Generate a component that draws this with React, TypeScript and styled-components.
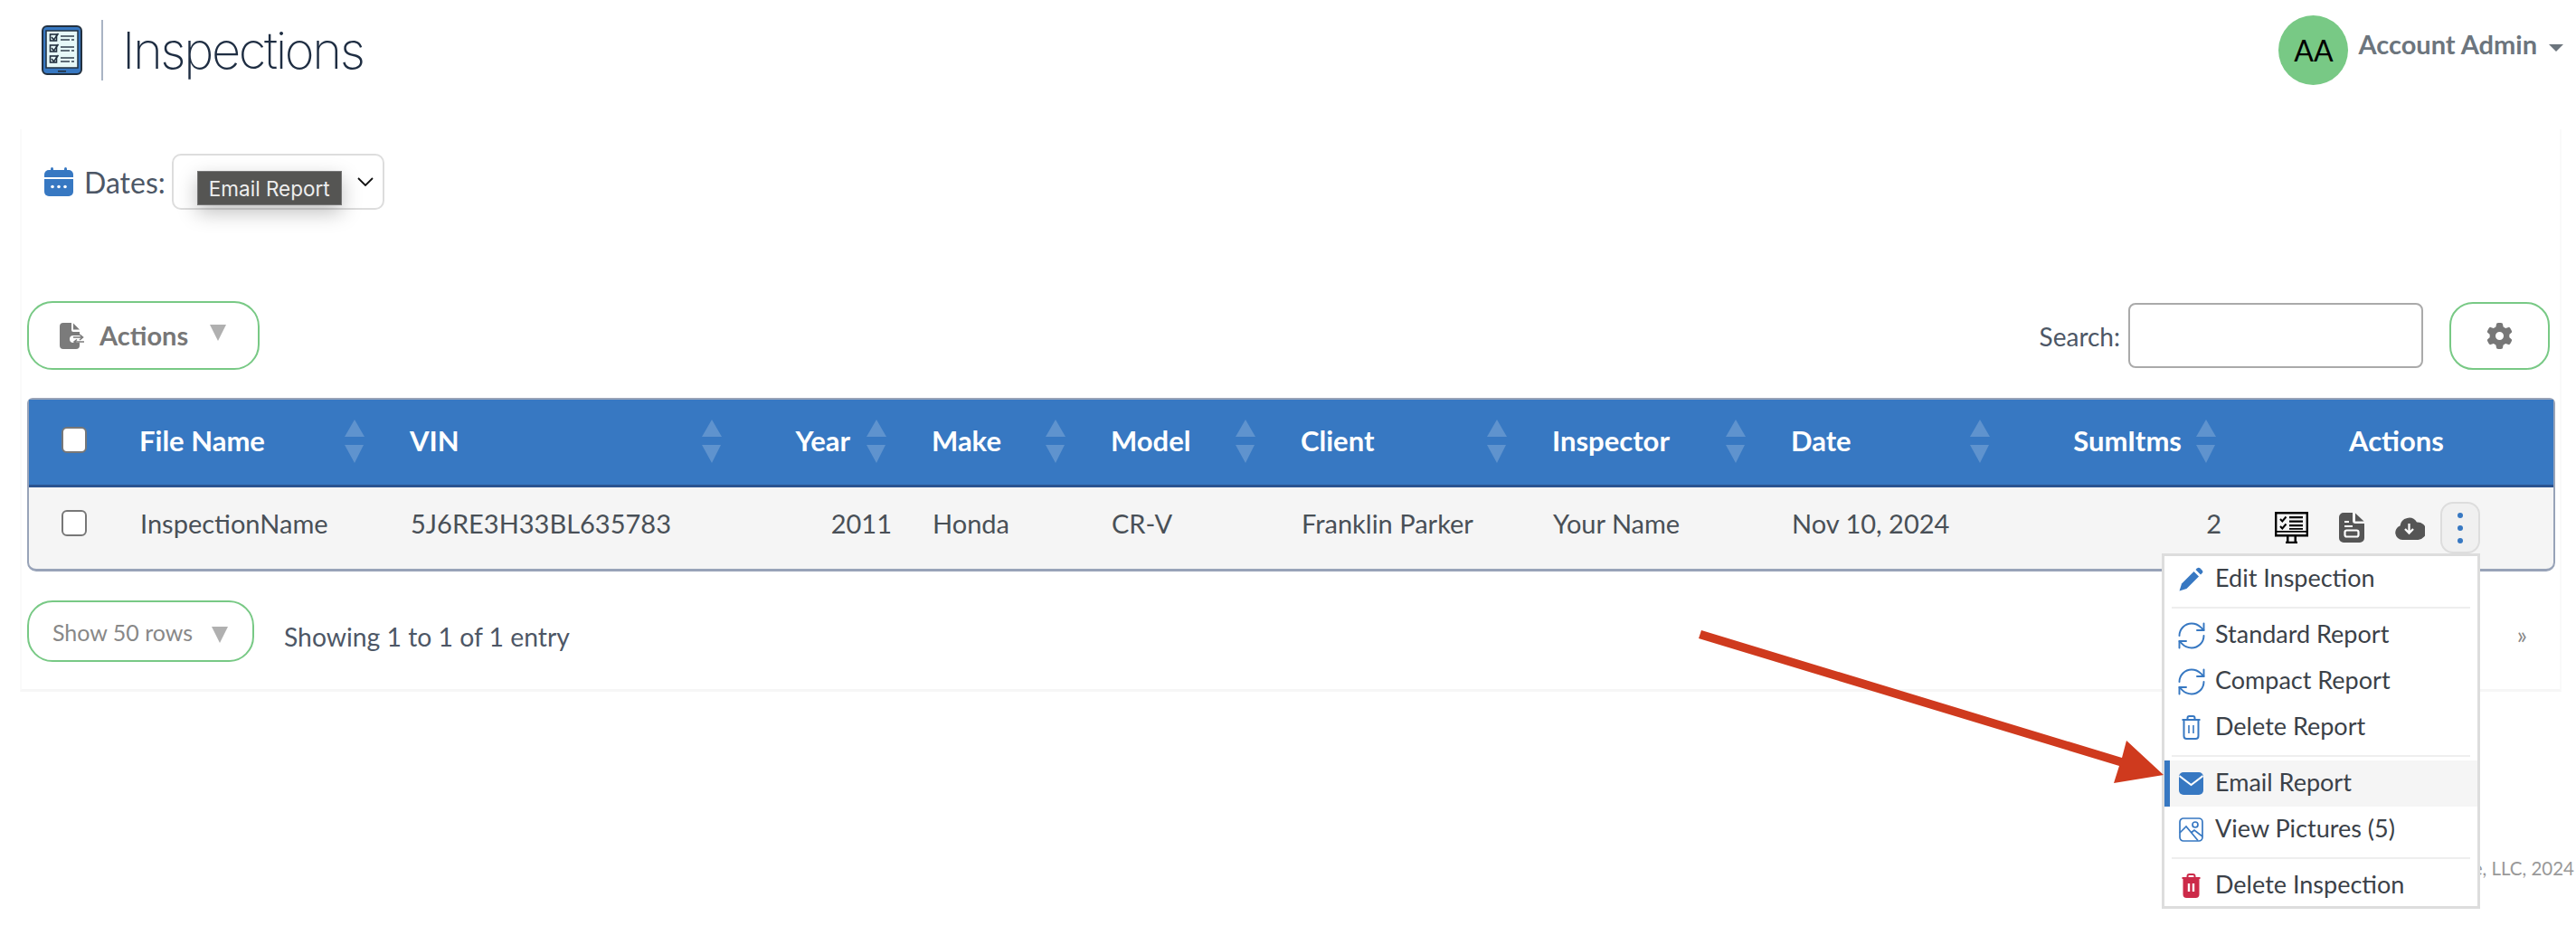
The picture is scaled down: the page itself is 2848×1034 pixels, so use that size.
import { createGlobalStyle, styled } from "styled-components"
import { FaGear } from "react-icons/fa6"
import { RefreshCw } from "lucide-react"

const blue = "#3778c2"
const green = "#78c985"

const columns = [
  { label: "File Name", value: "InspectionName", width: 299 },
  { label: "VIN", value: "5J6RE3H33BL635783", width: 395 },
  { label: "Year", value: "2011", width: 182, numeric: true, headPad: 67 },
  { label: "Make", value: "Honda", width: 198 },
  { label: "Model", value: "CR-V", width: 210 },
  { label: "Client", value: "Franklin Parker", width: 278 },
  { label: "Inspector", value: "Your Name", width: 264 },
  { label: "Date", value: "Nov 10, 2024", width: 270 },
  { label: "SumItms", value: "2", width: 250, numeric: true, headPad: 65 },
]

const GlobalStyle = createGlobalStyle`
  * {
    box-sizing: border-box;
  }
  html, body {
    margin: 0;
    background: white;
    overflow: hidden;
  }
  body {
    font-family: Lato, "Open Sans", sans-serif;
    color: #495057;
  }
`

function LogoIcon() {
  return (
    <svg width="45" height="55" viewBox="0 0 45 55">
      <rect x="1" y="1" width="43" height="53" rx="5" fill={blue} stroke="#22303f" strokeWidth="2" />
      <rect x="5" y="6" width="35" height="41" fill="#e6f8f8" stroke="#22303f" strokeWidth="1.5" />
      <rect x="18" y="50" width="9" height="1.6" fill="#22303f" />
      {[10, 22, 34].map((y) => (
        <g key={y} fill="none" stroke="#22303f">
          <rect x="9.5" y={y} width="7" height="7" strokeWidth="1.6" />
          <path d={`M11 ${y + 3} l2.5 3 l5 -7`} strokeWidth="1.6" />
          <path d={`M21 ${y + 2} h15`} strokeWidth="1.4" />
          <path d={`M21 ${y + 6} h10`} strokeWidth="1.4" />
          <path d={`M33 ${y + 6} h3`} strokeWidth="1.4" />
        </g>
      ))}
    </svg>
  )
}

function CalendarIcon() {
  return (
    <svg width="32" height="32" viewBox="0 0 32 32" fill={blue}>
      <rect x="7" y="0" width="3" height="5" rx="1.5" />
      <rect x="22" y="0" width="3" height="5" rx="1.5" />
      <path d="M5 3h22a5 5 0 0 1 5 5v3H0V8a5 5 0 0 1 5-5z" />
      <path d="M0 13h32v14a5 5 0 0 1-5 5H5a5 5 0 0 1-5-5z" />
      <g fill="white">
        <circle cx="9" cy="21.5" r="1.8" />
        <circle cx="16" cy="21.5" r="1.8" />
        <circle cx="23" cy="21.5" r="1.8" />
      </g>
    </svg>
  )
}

function FileExportIcon() {
  return (
    <svg width="29" height="29" viewBox="0 0 29 29" fill="#7b7b7b">
      <path d="M4 0h9v8a2 2 0 0 0 2 2h7v4h-7a4 4 0 0 0 0 8h7v3a4 4 0 0 1-4 4H4a4 4 0 0 1-4-4V4a4 4 0 0 1 4-4z" />
      <path d="M15 0.5l7 7h-7z" />
      <path d="M15 16h10M22 13l3.5 3-3.5 3M27 21H16M19 18.5l-3 2.5 3 2.5" fill="none" stroke="#7b7b7b" strokeWidth="1.6" />
    </svg>
  )
}

function SortArrows() {
  return (
    <svg width="22" height="48" viewBox="0 0 22 48" fill="white" fillOpacity="0.2">
      <path d="M11 0l11 19H0z" />
      <path d="M0 28h21L11 48z" />
    </svg>
  )
}

function MonitorIcon() {
  return (
    <svg width="37" height="35" viewBox="0 0 37 35">
      <path d="M1.2 1.2h34.6v25H1.2z" fill="none" stroke="black" strokeWidth="2.4" />
      <path d="M1 21h35v1.8H1z" />
      <path d="M13 26h2.5v7H13zM21.5 26H24v7h-2.5zM12 32.8h13V35H12z" />
      <path d="M6 8l2.3 2.500L12.500 5.500M6 16l2.300 2.500 4.200-5" fill="none" stroke="black" strokeWidth="2" />
      <path d="M16 5h15v2.200H16zM16 9.500h15v2.200H16zM16 14h15v2.200H16zM16 18h15v1.800H16z" />
    </svg>
  )
}

function ReportIcon() {
  return (
    <svg width="28" height="33" viewBox="0 0 28 33" fill="#555">
      <path d="M5 0h10v9a3 3 0 0 0 3 3h10v16a5 5 0 0 1-5 5H5a5 5 0 0 1-5-5V5a5 5 0 0 1 5-5z" />
      <path d="M18 0.500L27.500 9.500H18z" />
      <g fill="none" stroke="white" strokeWidth="2.200">
        <path d="M6 10h5M6 15h9" />
        <rect x="6.500" y="19.500" width="15" height="7" rx="2" />
      </g>
    </svg>
  )
}

function CloudIcon() {
  return (
    <svg width="33" height="27" viewBox="0 0 33 27">
      <path
        d="M8 27a8 8 0 0 1-2.500-15.500A10 10 0 0 1 24 7.500a7 7 0 0 1 1.500 19.500z"
        fill="#555"
      />
      <path d="M15.500 9v10M11 15l4.500 4.500L20 15" fill="none" stroke="white" strokeWidth="2.300" />
    </svg>
  )
}

function PenIcon() {
  return (
    <svg width="27" height="27" viewBox="0 0 27 27" fill={blue}>
      <path d="M0.500 26.500l2.500-8L16.500 5l5.500 5.500L8.500 24z" />
      <path d="M18.500 3l1.500-1.500a2.500 2.500 0 0 1 3.500 0l2 2a2.500 2.500 0 0 1 0 3.500L24 8.500z" />
    </svg>
  )
}

function TrashIcon({ solid }: { solid?: boolean }) {
  const color = solid ? "#cc2a49" : blue
  return (
    <svg width="27" height="27" viewBox="0 0 22 27" fill="none" stroke={color} strokeWidth="2">
      <path d="M7 4.500V3a2 2 0 0 1 2-2h4a2 2 0 0 1 2 2v1.500" />
      <path d="M1 5h20" />
      <path d="M3 5v18a3 3 0 0 0 3 3h10a3 3 0 0 0 3-3V5" fill={solid ? color : "none"} />
      <path d="M8.500 11v9M13.500 11v9" stroke={solid ? "white" : color} strokeWidth={solid ? 2.4 : 1.6} />
    </svg>
  )
}

function MailIcon() {
  return (
    <svg width="27" height="25" viewBox="0 0 27 25">
      <rect width="27" height="25" rx="5" fill={blue} />
      <path d="M0.500 4l13 10 13-10" fill="none" stroke="white" strokeWidth="2" />
    </svg>
  )
}

function PictureIcon() {
  return (
    <svg width="27" height="27" viewBox="0 0 27 27" fill="none" stroke={blue} strokeWidth="1.700">
      <rect x="1" y="1" width="25" height="25" rx="4" />
      <circle cx="18" cy="8" r="3" />
      <path d="M1 17l7-7 13 15.500M14 16.500l3-2.500 9 7" />
    </svg>
  )
}

function ArrowAnnotation() {
  return (
    <ArrowSvg width="2848" height="1034" viewBox="0 0 2848 1034">
      <polygon
        points="1881,697 2346,838 2351,819 2392,857 2337,866 2343,847 1878,706"
        fill="#cf3a1e"
      />
    </ArrowSvg>
  )
}

export default function App() {
  return (
    <Page>
      <GlobalStyle />
      <Header>
        <Brand>
          <LogoIcon />
          <BrandDivider />
          <Title>Inspections</Title>
        </Brand>
        <Account>
          <Avatar>AA</Avatar>
          <AccountName>Account Admin</AccountName>
          <Caret />
        </Account>
      </Header>

      <Panel>
        <DatesRow>
          <CalendarIcon />
          <DatesLabel>Dates:</DatesLabel>
          <DateSelect>
            <Tooltip>Email Report</Tooltip>
            <svg width="18" height="10" viewBox="0 0 18 10" fill="none" stroke="#111" strokeWidth="1.800">
              <path d="M1 1l8 8 8-8" />
            </svg>
          </DateSelect>
        </DatesRow>

        <Toolbar>
          <OutlineButton $width={257} $height={76}>
            <FileExportIcon />
            <ActionsLabel>Actions</ActionsLabel>
            <ButtonTriangle $gap={24} $lift={-6} />
          </OutlineButton>
          <SearchGroup>
            <SearchLabel>Search:</SearchLabel>
            <SearchInput />
            <GearButton>
              <FaGear size={29} color="#777" />
            </GearButton>
          </SearchGroup>
        </Toolbar>

        <TableFrame>
          <Table>
            <colgroup>
              <col width={99} />
              {columns.map((c) => (
                <col key={c.label} width={c.width} />
              ))}
              <col width={346} />
            </colgroup>
            <thead>
              <tr>
                <HeadCell>
                  <Checkbox type="checkbox" />
                </HeadCell>
                {columns.map((c) => (
                  <HeadCell key={c.label} $right={c.numeric} $pad={c.headPad}>
                    {c.label}
                    <SortSlot>
                      <SortArrows />
                    </SortSlot>
                  </HeadCell>
                ))}
                <HeadCell $center>Actions</HeadCell>
              </tr>
            </thead>
            <tbody>
              <tr>
                <BodyCell>
                  <Checkbox type="checkbox" />
                </BodyCell>
                {columns.map((c) => (
                  <BodyCell key={c.label} $right={c.numeric}>
                    {c.value}
                  </BodyCell>
                ))}
                <ActionsCell>
                  <RowActions>
                    <MonitorIcon />
                    <ReportIcon />
                    <CloudIcon />
                    <KebabWrap>
                      <KebabButton>
                        <KebabDot />
                        <KebabDot />
                        <KebabDot />
                      </KebabButton>
                      <Menu>
                        <MenuItem>
                          <MenuIcon><PenIcon /></MenuIcon>
                          Edit Inspection
                        </MenuItem>
                        <MenuDivider />
                        <MenuItem>
                          <MenuIcon><RefreshCw size={36} color={blue} strokeWidth={1.3} /></MenuIcon>
                          Standard Report
                        </MenuItem>
                        <MenuItem>
                          <MenuIcon><RefreshCw size={36} color={blue} strokeWidth={1.3} /></MenuIcon>
                          Compact Report
                        </MenuItem>
                        <MenuItem>
                          <MenuIcon><TrashIcon /></MenuIcon>
                          Delete Report
                        </MenuItem>
                        <MenuDivider />
                        <MenuItem $active>
                          <MenuIcon><MailIcon /></MenuIcon>
                          Email Report
                        </MenuItem>
                        <MenuItem>
                          <MenuIcon><PictureIcon /></MenuIcon>
                          View Pictures (5)
                        </MenuItem>
                        <MenuDivider />
                        <MenuItem>
                          <MenuIcon><TrashIcon solid /></MenuIcon>
                          Delete Inspection
                        </MenuItem>
                      </Menu>
                    </KebabWrap>
                  </RowActions>
                </ActionsCell>
              </tr>
            </tbody>
          </Table>
        </TableFrame>

        <TableFooter>
          <OutlineButton $width={251} $height={68}>
            <RowsLabel>Show 50 rows</RowsLabel>
            <ButtonTriangle $gap={21} $lift={8} />
          </OutlineButton>
          <EntryCount>Showing 1 to 1 of 1 entry</EntryCount>
          <NextPage>»</NextPage>
        </TableFooter>
      </Panel>

      <Copyright>© Software, LLC, 2024</Copyright>
      <ArrowAnnotation />
    </Page>
  )
}

const Page = styled.div`
  position: relative;
  width: 2848px;
  height: 1034px;
  overflow: hidden;
`

const Header = styled.header`
  height: 110px;
  margin-bottom: 33px;
  padding: 0 14px 0 46px;
  display: flex;
  align-items: center;
  justify-content: space-between;
`

const Brand = styled.div`
  display: flex;
  align-items: center;
`

const BrandDivider = styled.div`
  width: 2px;
  height: 67px;
  margin: 0 21px 0 21px;
  background: #a9b4c4;
`

const Title = styled.h1`
  margin: 2px 0 0;
  font-family: Inter, "Liberation Sans", sans-serif;
  font-size: 56px;
  font-weight: 250;
  letter-spacing: -2.4px;
  color: #1e2d42;
`

const Account = styled.div`
  display: flex;
  align-items: center;
`

const Avatar = styled.div`
  width: 77px;
  height: 77px;
  border-radius: 50%;
  background: ${green};
  display: flex;
  align-items: center;
  justify-content: center;
  font-size: 32px;
  color: black;
`

const AccountName = styled.span`
  margin: -14px 0 0 11px;
  font-size: 29px;
  font-weight: 700;
  color: #6c757d;
`

const Caret = styled.span`
  margin: -4px 0 0 13px;
  border-top: 8px solid #6c757d;
  border-left: 8px solid transparent;
  border-right: 8px solid transparent;
`

const Panel = styled.main`
  width: 2810px;
  height: 622px;
  margin-left: 22px;
  padding: 27px 7px 0 6px;
  border: solid #fafafa;
  border-width: 0 2px 3px 2px;
  border-bottom-color: #f6f6f6;
`

const DatesRow = styled.div`
  height: 62px;
  padding-left: 19px;
  display: flex;
  align-items: center;
`

const DatesLabel = styled.span`
  margin-left: 12px;
  font-size: 32px;
  color: #4d5766;
`

const DateSelect = styled.div`
  position: relative;
  width: 235px;
  height: 62px;
  margin-left: 7px;
  padding-right: 10px;
  border: 2px solid #ddd;
  border-radius: 10px;
  display: flex;
  align-items: center;
  justify-content: flex-end;
`

const Tooltip = styled.div`
  position: absolute;
  left: 26px;
  top: 17px;
  width: 160px;
  height: 38px;
  background: #555553;
  border: 1px solid #777;
  box-shadow: 0 8px 22px rgba(0, 0, 0, 0.25);
  display: flex;
  align-items: center;
  justify-content: center;
  font-family: Inter, sans-serif;
  font-size: 22.5px;
  color: #eee;
`

const Toolbar = styled.div`
  margin-top: 101px;
  display: flex;
  align-items: center;
  justify-content: space-between;
`

const OutlineButton = styled.div<{ $width: number; $height: number }>`
  width: ${({ $width }) => $width}px;
  height: ${({ $height }) => $height}px;
  padding-left: 34px;
  border: 2px solid ${green};
  border-radius: 28px;
  display: flex;
  align-items: center;
`

const ActionsLabel = styled.span`
  margin: -2px 0 0 15px;
  font-size: 29px;
  font-weight: 700;
  color: #777;
`

const ButtonTriangle = styled.span<{ $gap: number; $lift: number }>`
  margin: ${({ $lift }) => $lift}px 0 0 ${({ $gap }) => $gap}px;
  border-top: 18px solid #b0b0b0;
  border-left: 9px solid transparent;
  border-right: 9px solid transparent;
`

const SearchGroup = styled.div`
  display: flex;
  align-items: center;
  padding-right: 4px;
`

const SearchLabel = styled.span`
  font-size: 28px;
  color: #4d5766;
  margin-top: 2px;
`

const SearchInput = styled.div`
  width: 326px;
  height: 72px;
  margin-left: 9px;
  border: 2px solid #aaa;
  border-radius: 8px;
`

const GearButton = styled.div`
  width: 111px;
  height: 75px;
  margin-left: 29px;
  border: 2px solid ${green};
  border-radius: 26px;
  display: flex;
  align-items: center;
  justify-content: center;
`

const TableFrame = styled.div`
  width: 2795px;
  margin-top: 31px;
  background: #f5f5f5;
  border: solid #98a3b8;
  border-width: 2px 2px 3px 2px;
  border-radius: 6px 6px 10px 10px;
`

const Table = styled.table`
  width: 2791px;
  table-layout: fixed;
  border-collapse: collapse;
`

const HeadCell = styled.th<{ $right?: boolean; $center?: boolean; $pad?: number }>`
  position: relative;
  height: 95px;
  padding: 0 ${({ $pad }) => $pad ?? 24}px 4px 23px;
  background: ${blue};
  border-bottom: 3px solid #2a5390;
  font-size: 31px;
  font-weight: 700;
  color: white;
  text-align: ${({ $right, $center }) => ($right ? "right" : $center ? "center" : "left")};
  &:first-child {
    padding-left: 36px;
  }
`

const SortSlot = styled.span`
  position: absolute;
  right: 27px;
  top: 22px;
  display: block;
  line-height: 0;
`

const BodyCell = styled.td<{ $right?: boolean }>`
  position: relative;
  height: 92px;
  padding: 0 21px 10px 24px;
  font-size: 29px;
  color: #495057;
  white-space: nowrap;
  text-align: ${({ $right }) => ($right ? "right" : "left")};
  &:first-child {
    padding-left: 36px;
  }
`

const ActionsCell = styled(BodyCell)`
  padding-bottom: 0;
`

const RowActions = styled.div`
  display: flex;
  align-items: center;
  gap: 34px;
  padding-left: 14px;
`

const Checkbox = styled.input`
  appearance: none;
  display: block;
  width: 28px;
  height: 29px;
  margin: 0;
  background: white;
  border: 2px solid #777;
  border-radius: 6px;
`

const KebabWrap = styled.div`
  position: relative;
  margin-left: -17px;
`

const KebabButton = styled.div`
  width: 44px;
  height: 57px;
  background: #f0f0f0;
  border: 2px solid #ddd;
  border-radius: 14px;
  display: flex;
  flex-direction: column;
  align-items: center;
  justify-content: center;
  gap: 8px;
`

const KebabDot = styled.span`
  width: 6px;
  height: 6px;
  border-radius: 50%;
  background: ${blue};
`

const Menu = styled.div`
  position: absolute;
  right: 0;
  top: 57px;
  z-index: 5;
  width: 352px;
  height: 393px;
  background: white;
  border: 3px solid #ddd;
`

const MenuItem = styled.div<{ $active?: boolean }>`
  height: 51px;
  padding: 0 0 4px ${({ $active }) => ($active ? 10 : 16)}px;
  background: ${({ $active }) => ($active ? "#f5f5f5" : "transparent")};
  border-left: ${({ $active }) => ($active ? `6px solid ${blue}` : "0")};
  display: flex;
  align-items: center;
  font-size: 27px;
  color: #3b4148;
`

const MenuIcon = styled.span`
  width: 27px;
  margin: 4px 13px 0 0;
  display: flex;
  align-items: center;
  justify-content: center;
  svg {
    flex-shrink: 0;
  }
`

const MenuDivider = styled.div`
  height: 2px;
  margin: 5px 8px 4px 8px;
  background: #eee;
`

const TableFooter = styled.div`
  margin-top: 32px;
  display: flex;
  align-items: center;
`

const RowsLabel = styled.span`
  margin: 2px 0 0 -8px;
  font-size: 25px;
  color: #888;
`

const EntryCount = styled.span`
  margin: 11px 0 0 33px;
  font-size: 28.3px;
  color: #4d5766;
`

const NextPage = styled.span`
  margin: 8px 0 0 auto;
  padding-right: 29px;
  font-size: 26px;
  color: #888;
`

const Copyright = styled.div`
  margin-top: 183px;
  padding-right: 2px;
  text-align: right;
  font-size: 20.5px;
  color: #999;
`

const ArrowSvg = styled.svg`
  position: absolute;
  left: 0;
  top: 0;
  z-index: 10;
  pointer-events: none;
`
